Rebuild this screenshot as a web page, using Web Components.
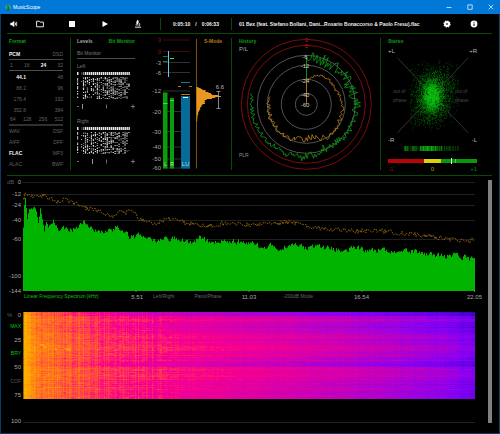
<!DOCTYPE html>
<html lang="en">
<head>
<meta charset="utf-8">
<title>MusicScope</title>
<style>
  html, body { margin: 0; background: #000; }
  body { font: 5px/8px "Liberation Sans", Arial, sans-serif; color: #a8a8a8; }
</style>
</head>
<body>
<music-scope></music-scope>
<script>
const RESET = `
  *, *::before { box-sizing: border-box; }
  button { appearance: none; background: none; border: 0; margin: 0; padding: 0; font: inherit; color: inherit; cursor: pointer; white-space: nowrap; }
  svg, canvas { display: block; }
  svg text { font-size: 6px; dominant-baseline: central; }
  svg .small { font-size: 5px; }
  svg .title { font-size: 5px; font-weight: bold; }
`;

function random(seed) {
  return () => {
    seed = (seed + 0x6D2B79F5) | 0;
    let t = Math.imul(seed ^ (seed >>> 15), 1 | seed);
    t = (t + Math.imul(t ^ (t >>> 7), 61 | t)) ^ t;
    return ((t ^ (t >>> 14)) >>> 0) / 4294967296;
  };
}

/* Linear interpolation through a list of [x, y] points. */
function curve(points, x) {
  for (let i = 1; i < points.length; i++) {
    const [x0, y0] = points[i - 1], [x1, y1] = points[i];
    if (x <= x1) return y0 + (y1 - y0) * (x - x0) / (x1 - x0);
  }
  return points[points.length - 1][1];
}

function define(name, css, html, ready) {
  customElements.define(name, class extends HTMLElement {
    connectedCallback() {
      if (this.shadowRoot) return;
      const root = this.attachShadow({ mode: 'open' });
      root.innerHTML = `<style>${RESET}${css}</style>${typeof html === 'function' ? html(this) : html}`;
      if (ready) ready(root, this);
    }
  });
}

define('title-bar', `
  :host { display: flex; align-items: center; height: 14px; padding: 0 6px 0 5px; background: #0078d7; color: #fff; }
  h1 { flex: 1; margin: 0 0 0 2px; font: inherit; }
  .controls { display: flex; gap: 15px; }
  .controls svg { width: 6px; height: 6px; fill: none; stroke: #e4f1fc; stroke-width: .8; }
`, `
  <svg width="6" height="7" viewBox="0 0 6 7"><circle cx="3" cy="3.5" r="3" fill="#2f9c84"/><path d="M2.6 1.2 L3.4 3.4 L1.8 4.6 M3.4 3.4 L3.8 6 M1 6 H4.8" stroke="#0c4a44" fill="none" stroke-width=".8"/></svg>
  <h1><slot></slot></h1>
  <div class="controls">
    <button aria-label="Minimise"><svg viewBox="0 0 6 6"><path d="M.5 3.5H5.5"/></svg></button>
    <button aria-label="Maximise"><svg viewBox="0 0 6 6"><path d="M.8 .9H5.2V5.3H.8Z"/></svg></button>
    <button aria-label="Close"><svg viewBox="0 0 6 6"><path d="M.7 .7L5.3 5.3M5.3 .7L.7 5.3"/></svg></button>
  </div>
`);

define('tool-bar', `
  :host { display: grid; grid-template-columns: 25px 28px 36px 30px 36px 76px minmax(0, 1fr) 26px 28px 4px; align-items: center; height: 19px; color: #f0f0f0; font-weight: bold; }
  button { display: grid; place-items: center; height: 12px; }
  svg { fill: #fff; }
  .time { display: flex; justify-content: center; align-items: center; gap: 5px; height: 12px; margin-left: 4px; border: solid #064a06; border-width: 0 1px; }
  .name { padding-left: 7px; white-space: nowrap; overflow: hidden; text-overflow: ellipsis; }
`, `
  <button aria-label="Volume"><svg width="8" height="8" viewBox="0 0 8 8"><path d="M.3 2.8H2L4.3 .8V7.2L2 5.2H.3Z"/><path d="M5.2 2.6Q6 4 5.2 5.4M6.2 1.8Q7.7 4 6.2 6.2" fill="none" stroke="#fff" stroke-width=".8"/></svg></button>
  <button aria-label="Open"><svg width="8" height="8" viewBox="0 0 8 8"><path d="M.6 6.8V1.2H3.2L4 2.1H7.4V6.8Z" fill="none" stroke="#fff" stroke-width=".9"/></svg></button>
  <button aria-label="Stop"><svg width="6" height="6" viewBox="0 0 6 6"><path d="M0 0H6V6H0Z"/></svg></button>
  <button aria-label="Play"><svg width="6" height="6" viewBox="0 0 6 6"><path d="M.5 0L6 3L.5 6Z"/></svg></button>
  <button aria-label="Analyse"><svg width="8" height="8" viewBox="0 0 8 8"><path d="M3 0L4.8 .7L3.9 4.2L2.1 3.6Z"/><path d="M4.6 2.6Q6.8 4.2 5 6.2M1.6 4.9H4.4M1 7.2H7" fill="none" stroke="#fff" stroke-width=".9"/></svg></button>
  <div class="time"><span>0:05:10</span><span>/</span><span>0:06:33</span></div>
  <div class="name"><slot></slot></div>
  <button aria-label="Settings"><svg width="8" height="8" viewBox="0 0 8 8"><circle cx="4" cy="4" r="3" stroke="#fff" stroke-width="1.2" stroke-dasharray="1.2 1.156"/><circle cx="4" cy="4" r="1.1" fill="#555"/></svg></button>
  <button aria-label="Information"><svg width="8" height="8" viewBox="0 0 8 8"><circle cx="4" cy="4" r="3.4"/><path d="M4 3.5V6M4 1.8V2.7" stroke="#000" stroke-width="1"/></svg></button>
`);

define('format-panel', `
  :host { display: block; padding: 3px 8px 0 2px; color: #626262; }
  h2 { margin: 0 0 4px; font: bold 5px/8px "Liberation Sans", Arial, sans-serif; color: #0ca00c; }
  div { display: flex; justify-content: space-between; height: 11px; line-height: 9px; }
  .rule { height: 11px; border-bottom: 1px solid #4c4c4c; line-height: 10px; }
  .thick { border-bottom: 2px solid #303030; margin-bottom: 1px; line-height: 9px; }
  .bits { padding-left: 1px; }
  .rate { line-height: 13px; }
  .rate :first-child { width: 17px; text-align: right; }
  b { color: #f4f4f4; }
`, `
  <h2>Format</h2>
  <div class="rule"><b>PCM</b><span>DSD</span></div>
  <div class="rule bits"><span>1</span><span>16</span><b>24</b><span>32</span></div>
  <div class="rate"><b>44.1</b><span>48</span></div>
  <div class="rate"><span>88.2</span><span>96</span></div>
  <div class="rate"><span>176.4</span><span>192</span></div>
  <div class="rate"><span>352.8</span><span>384</span></div>
  <div class="thick bits"><span>64</span><span>128</span><span>256</span><span>512</span></div>
  <div><span>WAV</span><span>DSF</span></div>
  <div><span>AIFF</span><span>DFF</span></div>
  <div><b>FLAC</b><span>MP3</span></div>
  <div><span>ALAC</span><span>BWF</span></div>
`);

define('bit-matrix', `
  :host { display: block; }
  .label { height: 12px; line-height: 12px; color: #7a7a7a; }
  .bits { width: 92%; height: 28px; }
  svg { width: 100%; height: auto; }
`, el => {
  const rnd = random(Number(el.getAttribute('seed')));
  let cells = '';
  for (let c = 0; c < 27; c++) {
    if (c === 1) continue;
    const head = c === 2 ? '#333' : c === 3 ? '#888' : '#e8e8e8';
    cells += `<path d="M${c * 2} 0h1.5v3h-1.5z" fill="${head}"/>`;
    const density = c === 2 || c === 26 ? .2 : c === 0 ? .6 : .35 + rnd() * .45;
    for (let y = 5; y < 27; y++) {
      if (rnd() > density) continue;
      const g = 70 + Math.floor(rnd() * 170);
      cells += `<path d="M${c * 2} ${y}h1.2v1h-1.2z" fill="rgb(${g},${g},${g})"/>`;
    }
  }
  return `<div class="label">${el.getAttribute('label')}</div>
  <svg class="bits" viewBox="0 0 54 28" preserveAspectRatio="none">${cells}</svg>
  <svg viewBox="0 0 58 12"><path d="M0 6.5H2M56 4.5V8.5M54 6.5H58M29.5 4.5V8.5" stroke="#888" stroke-width=".8"/><path d="M${el.getAttribute('mark')} 4V9" stroke="#bbb" stroke-width=".8"/></svg>`;
});

define('levels-panel', `
  :host { display: block; padding: 3px 11px 0 6px; }
  nav { display: flex; justify-content: space-between; height: 12px; font-weight: bold; line-height: 8px; }
  button { height: 8px; line-height: 8px; }
  .on { color: #0ca00c; }
  h2 { margin: 0 0 1px; height: 10px; border-bottom: 1px solid #4c4c4c; font: 5px/9px "Liberation Sans", Arial, sans-serif; color: #7a7a7a; }
  bit-matrix + bit-matrix { margin-top: 3px; }
`, `
  <nav><button>Levels</button><button class="on">Bit Monitor</button></nav>
  <h2>Bit Monitor</h2>
  <bit-matrix label="Left" seed="3" mark="5.5"></bit-matrix>
  <bit-matrix label="Right" seed="8" mark="15.5"></bit-matrix>
`);

define('meter-panel', `
  :host { display: block; }
  svg { width: 100%; height: auto; }
`, () => {
  const scale = [[6, '3'], [17.5, '0'], [28.5, '-3'], [38.5, '-6'], [57, '-12'], [77.5, '-20'], [97.5, '-30'], [113, '-40'], [125, '-50'], [134, '-60']];
  const labels = scale.map(([y, t], i) => `<text x="15" y="${y}" text-anchor="end" fill="${i < 2 ? '#9c1414' : '#a8a8a8'}">${t}</text><path d="M17 ${y}H44" stroke="${i < 2 ? '#5a0a0a' : '#3c3c3c'}" stroke-width=".8"/>`).join('');
  const shape = [[53, 2], [54, 4], [56, 9], [58, 12], [60, 16], [61, 20], [62, 27], [63, 18], [64, 15], [65, 10], [67, 9], [69, 8], [71, 5], [74, 4], [78, 2], [82, 1], [87, .5]];
  const rnd = random(5);
  let d = 'M50.5 53';
  for (let y = 53; y < 88; y++) d += `H${(50.5 + curve(shape, y) * (.85 + rnd() * .25)).toFixed(1)}V${y + 1}`;
  return `<svg viewBox="0 0 86 141">${labels}
    <path d="M17 58.5H21.5V134.5H17ZM24 64H28V134.5H24Z" fill="#0a9c0a"/>
    <path d="M17 69.5H21.5M24 66.5H28M24 24.5H28" stroke="#2cf02c"/>
    <path d="M17 22.5H21.5M17 27.5H21.5" stroke="#109048" stroke-width=".9"/>
    <path d="M35 62H44V134.5H35Z" fill="#066b98"/>
    <path d="M37 63.5H42" stroke="#e8f4ff"/>
    <path d="M35 48.5H44" stroke="#0878a8"/>
    <path d="M35 60.5H44M32 52.5H35M43 52.5H46" stroke="#b87414"/>
    <path d="M22.5 17V43" stroke="#62c8f4"/>
    <path d="M50.5 5V134.5" stroke="#8a5a14" stroke-width=".9"/>
    <path d="${d}H50.5Z" fill="#e89820"/>
    <path d="M72.5 57.5V74.5M70.5 57.5H74.5M70.5 74.5H74.5" stroke="#aaa" stroke-width=".8"/>
    <text x="74" y="53" text-anchor="middle" fill="#b8b8b8">6.6</text>
    <text class="title" x="58" y="7" fill="#b47a1c">S-Mode</text>
    <g fill="#b0f0b0" text-anchor="middle"><text class="small" x="19.5" y="130">L</text><text class="small" x="26" y="130">R</text><text x="39.5" y="130" fill="#b0dcec">LU</text></g>
  </svg>`;
});

define('history-panel', `
  :host { display: block; }
  svg { width: 100%; height: auto; }
`, () => {
  const cx = 74.3, cy = 70.3;
  const trace = (points, end, step, noise, rnd) => {
    let d = '';
    for (let a = 0; a <= end; a += step) {
      const r = curve(points, a) + (rnd() - .5) * curve(noise, a);
      const t = a * Math.PI / 180;
      d += `${d ? 'L' : 'M'}${(cx + r * Math.sin(t)).toFixed(1)} ${(cy - r * Math.cos(t)).toFixed(1)}`;
    }
    return d;
  };
  const peak = trace([[0, 46], [20, 47], [60, 47], [90, 50], [120, 50], [160, 48], [180, 53], [210, 53], [250, 54], [283, 55]], 282, 1.4, [[0, 14], [70, 13], [95, 8], [130, 6], [170, 10], [200, 6], [240, 6], [283, 4]], random(21));
  const range = trace([[0, 25], [28, 32], [60, 33], [90, 36], [120, 37], [145, 40], [170, 32], [180, 34], [200, 37], [225, 38], [268, 38], [285, 37]], 283, 2.2, [[0, 3], [140, 4], [160, 8], [190, 6], [283, 4]], random(4));
  const ring = (r, c) => `<circle cx="${cx}" cy="${cy}" r="${r}" fill="none" stroke="${c}" stroke-width=".9"/>`;
  const labels = [[6, '3'], [12, '0'], [22.5, '-6'], [32, '-12'], [46.5, '-24'], [60.5, '-40'], [71, '-60']]
    .map(([y, t], i) => `<text x="${i < 2 ? 74.5 : 73}" y="${y}" text-anchor="middle" fill="${i < 2 ? '#c81c1c' : '#ccc'}">${t}</text>`).join('');
  return `<svg viewBox="0 0 149 141">
    ${ring(65, '#8c0c0c')}${ring(59, '#8c0c0c')}${ring(49, '#5c5c5c')}${ring(39, '#5c5c5c')}${ring(25, '#5c5c5c')}${ring(11, '#5c5c5c')}
    <path d="${peak}" fill="none" stroke="#0e9e18" stroke-width=".8"/>
    <path d="${range}" fill="none" stroke="#c08018" stroke-width=".8"/>
    <path d="M74.5 22V46" stroke="#0e9e18" stroke-width=".9"/><path d="M74.5 44V70" stroke="#c08018" stroke-width=".9"/>
    ${labels}
    <text class="title" x="7" y="7" fill="#0ca00c">History</text>
    <text x="7" y="15" fill="#a8a8a8">P/L</text><text class="small" x="7" y="121" fill="#909090">PLR</text>
  </svg>`;
});

define('stereo-panel', `
  :host { display: block; }
  svg { width: 100%; height: auto; }
`, () => {
  const rnd = random(77);
  const gauss = () => (rnd() + rnd() + rnd() + rnd() - 2) / 1.16;
  const layers = ['', '', ''];
  for (let i = 0; i < 3000; i++) {
    const wide = i % 3;
    const y = wide ? 62 + gauss() * 29 : 62 + gauss() * 18;
    const x = wide ? 51 + (62 - y) * .15 + gauss() * 21 : 50.5 + gauss() * 9;
    if (x < 29 || x > 77 || y < 27 || y > 96) continue;
    const far = Math.hypot((x - 51) / 24, (y - 62) / 34) + rnd() * .3;
    layers[far < .42 ? 2 : far < .75 ? 1 : 0] += `M${x.toFixed(1)} ${y.toFixed(1)}h.8`;
  }
  let bars = '';
  for (let x = 23; x < 78; x++) {
    const o = x > 38 && x < 56 ? .4 + rnd() * .6 : x < 64 ? rnd() * .7 : rnd() * .35;
    bars += `<path d="M${x}.5 112V117" stroke="#0cb40c" stroke-opacity="${o.toFixed(2)}"/>`;
  }
  return `<svg viewBox="0 0 111 141">
    <path d="M16.3 23.7L87.3 99M87.3 23.7L16.3 99" stroke="#484848" stroke-width=".7"/>
    <g fill="#484848"><text class="small" x="12" y="57">out of</text><text class="small" x="12" y="66">phase</text><text class="small" x="74" y="57">out of</text><text class="small" x="74" y="66">phase</text></g>
    <path d="${layers[0]}" stroke="#085c08" stroke-width=".8"/>
    <path d="${layers[1]}" stroke="#0a840c" stroke-width=".8"/>
    <path d="${layers[2]}" stroke="#10bc14" stroke-width=".8"/>
    ${bars}
    <text class="title" x="7" y="7" fill="#0ca00c">Stereo</text>
    <g fill="#b8b8b8"><text x="7" y="17">+L</text><text x="96" y="17" text-anchor="end">+R</text><text x="7" y="105.5">-R</text><text x="96" y="105.5" text-anchor="end">-L</text></g>
    <path d="M7 125H43V129H7Z" fill="#b80404"/><path d="M43 125H60V129H43Z" fill="#d8d008"/><path d="M60 125H96V129H60Z" fill="#08980c"/>
    <path d="M70.5 124V130" stroke="#e4f8e4"/><path d="M74.5 125V129" stroke="#60c060"/>
    <text x="7" y="135" fill="#981010">-1</text><text x="51.5" y="135" text-anchor="middle" fill="#a8a010">0</text><text x="96" y="135" text-anchor="end" fill="#108810">+1</text>
  </svg>`;
});

define('spectrum-chart', `
  :host { display: grid; grid-template-columns: 16px minmax(0, 1fr); }
  .axis { display: grid; grid-template-rows: 8px 12px 11px 15px 19px 37px 15px; align-items: end; justify-items: end; padding-right: 2px; font-size: 6px; color: #a8a8a8; }
  .first { display: flex; justify-content: space-between; width: 100%; }
  .unit { color: #585858; }
  svg { width: 100%; height: 114px; }
  .labels { display: grid; grid-template-columns: repeat(4, minmax(0, 1fr)); align-items: start; height: 12px; color: #646464; }
  .labels div { display: flex; align-items: center; height: 8px; }
  .labels button { height: 8px; line-height: 8px; }
  .hz { margin: 2px -7px 0 auto; font-size: 6px; color: #a8a8a8; }
  .on { color: #0cc00c; padding-left: 1px; }
  .two { gap: 20px; padding-left: 17px; }
  .one { padding-left: 34px; }
`, () => {
  const rnd = random(12);
  const level = [[23, 228], [24, 205], [25, 199], [26, 208], [27, 219], [29, 210], [31, 208], [34, 207], [36, 212], [38, 224], [40, 209], [42, 220], [44, 232], [46, 222], [48, 228], [53, 222], [56, 228], [60, 231], [66, 227], [72, 230], [78, 227], [83, 222], [90, 229], [100, 233], [110, 231], [116, 227], [125, 232], [130, 237], [145, 236], [155, 240], [175, 238], [190, 242], [200, 237], [210, 244], [225, 241], [237, 242], [250, 242], [260, 247], [270, 246], [280, 248], [292, 245], [305, 248], [320, 247], [340, 250], [355, 248], [370, 251], [382, 249], [395, 252], [410, 251], [430, 254], [445, 257], [455, 254], [475, 261]];
  const peak = [[23, 200], [26, 193], [35, 197], [45, 196], [55, 202], [65, 199], [80, 206], [100, 212], [115, 217], [120, 209], [125, 214], [130, 208], [140, 220], [155, 223], [170, 219], [190, 224], [210, 226], [225, 223], [245, 225], [260, 224], [275, 223], [290, 222], [310, 227], [330, 229], [350, 231], [380, 231], [410, 234], [430, 236], [450, 239], [470, 241], [475, 239]];
  let area = 'M0 113', dots = '', n = 0;
  for (let x = 0; x < 452; x++) {
    n = n * .45 + (rnd() - .5) * (x < 30 ? 3 : 5);
    area += `V${(curve(level, x + 23) - 178 + n).toFixed(1)}H${x + 1}`;
    dots += `${x ? 'L' : 'M'}${x} ${(curve(peak, x + 23) - 178 + (rnd() - .5) * 5).toFixed(1)}`;
  }
  const grid = [4.5, 16.5, 27.5, 42.5, 61.5, 98.5].map(y => `M0 ${y}H452`).join('');
  return `<div class="axis"><div class="first"><span class="unit">dB</span><span>0</span></div><span>-12</span><span>-24</span><span>-40</span><span>-60</span><span>-100</span><span>-144</span></div>
  <div>
    <svg viewBox="0 0 452 114" preserveAspectRatio="none">
      <path d="${grid}" stroke="#242424" stroke-width=".9"/>
      <path d="${area}V113Z" fill="#00b400"/>
      <path d="${dots}" fill="none" stroke="#a8740f" stroke-width=".8" stroke-dasharray="1.8 1.2"/>
      <path d="M113 112V114M226 112V114M339 112V114M451.5 112V114" stroke="#888" stroke-width=".8"/>
    </svg>
    <div class="labels">
      <div><button class="on">Linear Frequency Spectrum [kHz]</button><span class="hz">5.51</span></div>
      <div class="two"><button>Left/Right</button><button>Pano/Phase</button><span class="hz">11.03</span></div>
      <div class="one"><button>-200dB Mode</button><span class="hz">16.54</span></div>
      <div><span class="hz">22.05</span></div>
    </div>
  </div>`;
});

define('spectro-gram', `
  :host { display: grid; grid-template-columns: 16px minmax(0, 1fr); margin-top: 7px; }
  .axis { display: grid; grid-template-rows: 8px 11px 14px 13px 14px 14px 14px 26px; align-items: end; justify-items: end; padding-right: 2px; font-size: 6px; color: #a8a8a8; }
  .first { display: flex; justify-content: space-between; width: 100%; }
  .unit, .off { color: #585858; }
  button { height: 8px; font-size: 5px; line-height: 8px; }
  .on { color: #0cc00c; }
  .plot { padding-top: 1px; border-bottom: 1px solid #222; height: 112px; }
  canvas { width: 100%; height: 87px; }
`, `
  <div class="axis"><div class="first"><span class="unit">%</span><span>0</span></div><button class="on">MAX</button><span>25</span><button class="on">BRY</button><span>50</span><button class="off">COF</button><span>75</span><span>100</span></div>
  <div class="plot"><canvas width="452" height="87"></canvas></div>
`, root => {
  const W = 452, H = 87, ctx = root.querySelector('canvas').getContext('2d');
  const img = ctx.createImageData(W, H), rnd = random(31);
  const stops = [[0, 16, 0, 96], [.15, 80, 0, 220], [.3, 136, 0, 244], [.45, 204, 0, 180], [.58, 250, 0, 140], [.7, 255, 66, 72], [.85, 255, 134, 16], [1, 255, 176, 0]];
  const channels = [1, 2, 3].map(k => stops.map(s => [s[0], s[k]]));
  const fall = [[0, 1.02], [8, .9], [16, .82], [50, .74], [75, .67], [110, .62], [150, .57], [250, .49], [350, .4], [420, .32], [452, .24]];
  const streaks = [[16, 32, 5], [20, 34, 4], [31, 36, 3], [41, 36, 5], [44, 37, 4]];
  const rows = [], cols = [];
  for (let y = 0; y < H; y++) {
    let b = (rnd() - .5) * .08;
    if (y < 4) b -= .17 - y * .02;
    else if (y > 9 && y < 22) b -= .04;
    if (y > 24 && y < 46) b += .03;
    if (y > 48 && y < 54) b -= .07;
    if (y > 55 && y < 68) b += .03;
    rows.push(b);
  }
  for (let x = 0; x < W; x++) cols.push((rnd() - .5) * (x < 140 ? .1 : .03));
  for (let y = 0; y < H; y++) {
    let n = 0;
    for (let x = 0; x < W; x++) {
      n = n * .6 + (rnd() - .5) * (x < 150 ? .07 : .035);
      let v = curve(fall, x) + rows[y] * Math.min(1, .35 + x / 200) + cols[x] + n;
      for (const [sx, sy, w] of streaks) if (x >= sx && x < sx + w && Math.abs(y - sy - (x - sx) * .2) < 1) v += .12;
      v = Math.max(0, Math.min(1, v));
      const i = (y * W + x) * 4;
      for (let k = 0; k < 3; k++) img.data[i + k] = curve(channels[k], v) * (x < 1 ? .6 : 1);
      img.data[i + 3] = 255;
    }
  }
  ctx.putImageData(img, 0, 0);
});

define('music-scope', `
  :host { display: block; }
  .body { min-height: calc(100vh - 14px); border: solid #083c66; border-width: 0 1px 1px; padding: 0 7px 0 6px; background: #000; }
  .body > tool-bar { margin-left: -6px; }
  .panels { display: grid; grid-template-columns: 64fr 75fr 86fr 149fr 111fr; border: solid #064a06; border-width: 1px 0; }
  .panels > * { min-width: 0; }
  .sep { background: linear-gradient(#064a06, #064a06) right 4px / 1px calc(100% - 9px) no-repeat; background-position: right 4px; }
  .lower { display: flex; gap: 13px; padding-top: 2px; }
  .charts { flex: 1; min-width: 0; }
  .scroll { width: 4px; margin: 2px 0 2px; background: #808080; }
`, `
  <title-bar>MusicScope</title-bar>
  <div class="body">
    <tool-bar>01 Bex (feat. Stefano Bollani, Dani...Rosario Bonaccorso &amp; Paolo Fresu).flac</tool-bar>
    <div class="panels">
      <format-panel class="sep"></format-panel>
      <levels-panel></levels-panel>
      <meter-panel class="sep"></meter-panel>
      <history-panel class="sep"></history-panel>
      <stereo-panel></stereo-panel>
    </div>
    <div class="lower">
      <div class="charts" id="charts">
        <spectrum-chart></spectrum-chart>
        <spectro-gram></spectro-gram>
      </div>
      <div class="scroll" role="scrollbar" aria-label="Charts" aria-orientation="vertical" aria-valuenow="0" aria-controls="charts"></div>
    </div>
  </div>
`);
</script>
</body>
</html>
